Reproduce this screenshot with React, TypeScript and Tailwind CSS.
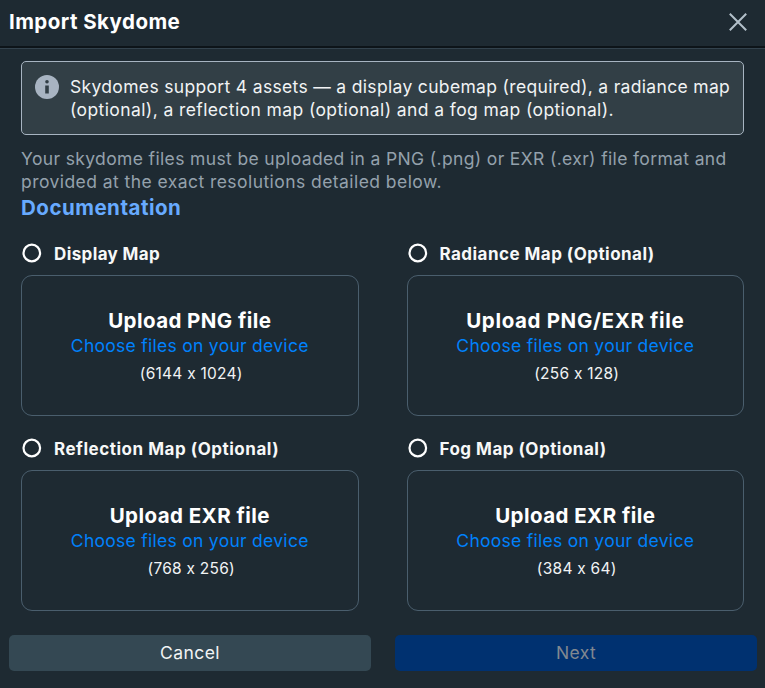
import React from "react";

type Card = {
  label: string;
  title: string;
  size: string;
  labelClass: string;
  titleClass: string;
};

const cards: Card[] = [
  { label: "Display Map", title: "Upload PNG file", size: "(6144 x 1024)", labelClass: "tracking-[0.38px]", titleClass: "tracking-[0.43px]" },
  { label: "Radiance Map (Optional)", title: "Upload PNG/EXR file", size: "(256 x 128)", labelClass: "tracking-[0.46px]", titleClass: "tracking-[0.65px]" },
  { label: "Reflection Map (Optional)", title: "Upload EXR file", size: "(768 x 256)", labelClass: "tracking-[0.52px]", titleClass: "tracking-[0.45px]" },
  { label: "Fog Map (Optional)", title: "Upload EXR file", size: "(384 x 64)", labelClass: "tracking-[0.48px]", titleClass: "tracking-[0.45px]" },
];

function UploadCard({ label, title, size, labelClass, titleClass }: Card) {
  return (
    <div>
      <label className="flex h-[34px] items-start gap-[11px]">
        <svg width="22" height="22" viewBox="0 0 22 22" className="mt-[1px] shrink-0">
          <circle cx="10.8" cy="11" r="8.3" fill="none" stroke="#fff" strokeWidth="2.2" />
        </svg>
        <span className={`whitespace-nowrap pt-[1px] text-[17px] font-bold leading-[24px] text-[#f7f8f8] ${labelClass}`}>{label}</span>
      </label>
      <div className="flex h-[141px] flex-col items-center rounded-[11px] border border-[#4a5e6d] pt-[31px]">
        <div className={`whitespace-nowrap text-[20.5px] font-bold leading-[27px] text-white ${titleClass}`}>{title}</div>
        <div className="whitespace-nowrap text-[17.5px] leading-[24px] tracking-[0.28px] text-[#0081fb]">Choose files on your device</div>
        <div className="mt-[4px] whitespace-nowrap pl-[3px] text-[15.5px] leading-[24px] tracking-[0.25px] text-[#f1f3f4]">{size}</div>
      </div>
    </div>
  );
}

export default function App() {
  return (
    <div className="h-[688px] w-[765px] overflow-hidden bg-[#1e2a32] font-['Inter',sans-serif] [font-feature-settings:'calt'_0]">
      <header className="flex h-[46px] items-center justify-between pl-[9px] pr-[17px]">
        <h1 className="whitespace-nowrap pb-[3px] text-[20.5px] font-bold leading-[28px] tracking-[0.45px] text-white">Import Skydome</h1>
        <svg width="20" height="20" viewBox="0 0 20 20" className="mb-[3px]">
          <path d="M1.8 1.8 18.2 18.2M18.2 1.8 1.8 18.2" stroke="#b3c0ca" strokeWidth="2" fill="none" />
        </svg>
      </header>
      <div className="h-[3px] border-b border-[#33424d] bg-[#0d1419]" />
      <main className="px-[21px] pt-[12px]">
        <div className="flex h-[74px] gap-[11px] rounded-[5px] border border-[#a7b4c1] bg-[#323f46] pl-[13px] pt-[13px]">
          <svg width="24" height="24" viewBox="0 0 24 24" className="shrink-0">
            <circle cx="12" cy="12" r="12" fill="#a8b4c2" />
            <circle cx="12" cy="6.8" r="1.8" fill="#323f46" />
            <path d="M10.2 10.5h3.6v8h-3.6z" fill="#323f46" />
          </svg>
          <p className="whitespace-nowrap text-[17.5px] leading-[23px] tracking-[0.33px] text-[#f1f3f4]">
            Skydomes support 4 assets — a display cubemap (required), a radiance map
            <br />
            <span className="tracking-[0.4px]">(optional), a reflection map (optional) and a fog map (optional).</span>
          </p>
        </div>
        <p className="mt-[12px] whitespace-nowrap text-[17.5px] leading-[23px] tracking-[0.36px] text-[#94a1ac]">
          Your skydome files must be uploaded in a PNG (.png) or EXR (.exr) file format and
          <br />
          <span className="tracking-[0.44px]">provided at the exact resolutions detailed below.</span>
        </p>
        <div className="mt-[1px] whitespace-nowrap text-[20.5px] font-bold leading-[28px] tracking-[0.5px] text-[#67aaff]">Documentation</div>
        <div className="mt-[19px] grid grid-cols-2 gap-x-[48px] gap-y-[20px]">
          {cards.map((c) => (
            <UploadCard key={c.label} {...c} />
          ))}
        </div>
      </main>
      <footer className="mt-[24px] grid grid-cols-2 gap-x-[24px] pl-[9px] pr-[8px] text-[17.5px] tracking-[0.4px]">
        <button className="h-[36px] rounded-[5px] bg-[#344853] pt-[1px] text-[#f1f3f4]">Cancel</button>
        <button className="h-[36px] rounded-[5px] bg-[#003170] pt-[1px] text-[#818890]">Next</button>
      </footer>
    </div>
  );
}
